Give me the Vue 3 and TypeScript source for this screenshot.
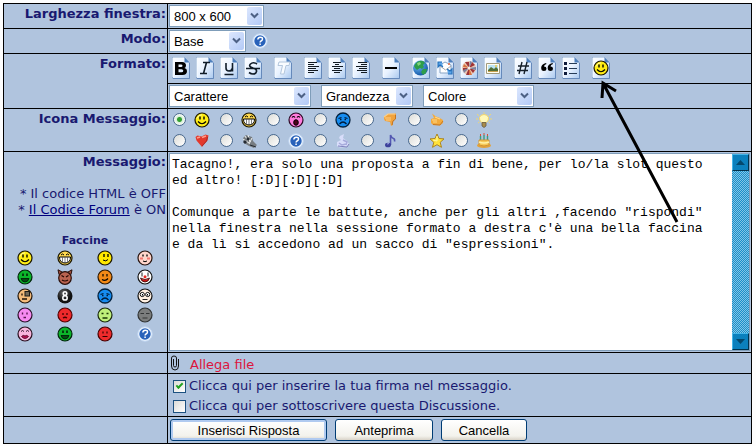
<script setup lang="ts">
import { ref } from 'vue'

interface Tool { icon: string; label: string }

const windowSize = ref('800 x 600')
const mode = ref('Base')
const messageIcon = ref('smile')
const signature = ref(true)
const subscribe = ref(false)

const message = ref(
  [
    'Tacagno!, era solo una proposta a fin di bene, per lo/la slot questo',
    'ed altro! [:D][:D][:D]',
    '',
    'Comunque a parte le battute, anche per gli altri ,facendo "rispondi"',
    "nella finestra nella sessione formato a destra c'è una bella faccina",
    'e da lì si accedono ad un sacco di "espressioni".',
  ].join('\n'),
)

const toolGroups: Tool[][] = [
  [
    { icon: 'bold', label: 'Grassetto' },
    { icon: 'italic', label: 'Corsivo' },
    { icon: 'underline', label: 'Sottolineato' },
    { icon: 'strike', label: 'Barrato' },
  ],
  [{ icon: 'type', label: 'Testo' }],
  [
    { icon: 'left', label: 'Allinea a sinistra' },
    { icon: 'center', label: 'Centra' },
    { icon: 'right', label: 'Allinea a destra' },
  ],
  [{ icon: 'rule', label: 'Linea orizzontale' }],
  [
    { icon: 'globe', label: 'Collegamento' },
    { icon: 'mail', label: 'Email' },
    { icon: 'flash', label: 'Flash' },
    { icon: 'picture', label: 'Immagine' },
  ],
  [
    { icon: 'hash', label: 'Codice' },
    { icon: 'quote', label: 'Citazione' },
    { icon: 'list', label: 'Elenco' },
  ],
  [{ icon: 'smile', label: 'Faccine' }],
]

const messageIcons = [
  'smile', 'grin', 'shock', 'sad', 'down', 'up', 'bulb',
  'heart', 'zebra', 'help', 'cloud', 'note', 'star', 'cake',
]

const smileys = [
  'smile', 'grin', 'happy', 'blush',
  'green', 'devil', 'orange', 'clown',
  'monocle', 'eight', 'sad', 'wideeyes',
  'kiss', 'red', 'lime', 'dead',
  'lips', 'green', 'angry', 'help',
]
</script>

<template>
  <svg class="sprite" aria-hidden="true">
    <defs>
      <linearGradient id="paper" x1="0" y1="0" x2="1" y2="1">
        <stop offset="0" stop-color="#ffffff" />
        <stop offset="0.5" stop-color="#e8f2ff" />
        <stop offset="1" stop-color="#a9c8ee" />
      </linearGradient>
      <radialGradient id="ball" cx="0.4" cy="0.3" r="0.7">
        <stop offset="0" stop-color="#666" />
        <stop offset="0.7" stop-color="#111" />
      </radialGradient>
      <radialGradient id="sea" cx="0.35" cy="0.3" r="0.8">
        <stop offset="0" stop-color="#79c4ff" />
        <stop offset="1" stop-color="#064a9c" />
      </radialGradient>
    </defs>

    <symbol id="sheet" viewBox="0 0 18 22">
      <path d="M.5.5h12l5 5v16H.5z" fill="url(#paper)" stroke="#8eabd0" />
      <path d="M1 20V1h11" fill="none" stroke="#f8fcff" />
      <path d="M12.500.5v5h5z" fill="#4e80bd" />
      <path d="M17.500 6v15.500H1" fill="none" stroke="#6589bb" />
    </symbol>

    <symbol id="smile" viewBox="0 0 16 16">
      <circle cx="8" cy="8" r="7" fill="#ffed14" stroke="#191500" stroke-width="1.200" />
      <path d="M3 6.500A5.300 5.300 0 0 1 8 2.800" stroke="#fff9a0" fill="none" />
      <path d="M6 4.500v3M10 4.500v3" stroke="#000" stroke-width="1.400" />
      <path d="M4 9.500q4 4.500 8 0" stroke="#000" fill="none" stroke-width="1.200" />
    </symbol>
    <symbol id="happy" viewBox="0 0 16 16">
      <circle cx="8" cy="8" r="7" fill="#ffe800" stroke="#191500" stroke-width="1.200" />
      <path d="M7 4v3M11 4v3" stroke="#000" stroke-width="1.300" />
      <path d="M6 10q3 2 5-.5" stroke="#000" fill="none" />
    </symbol>
    <symbol id="grin" viewBox="0 0 16 16">
      <circle cx="8" cy="8" r="7" fill="#ffd94e" stroke="#191500" stroke-width="1.200" />
      <path d="M4 5q1.500-2 3 0M9 5q1.500-2 3 0" stroke="#000" fill="none" />
      <path d="M2.500 7h11q0 6-5.500 6T2.500 7z" fill="#fff" stroke="#000" />
      <path d="M5.500 7.500v4.500M8 7.500V13M10.500 7.500v4.500" stroke="#000" stroke-width=".5" />
    </symbol>
    <symbol id="shock" viewBox="0 0 16 16">
      <circle cx="8" cy="8" r="7" fill="#ff7bdc" stroke="#2b0a24" stroke-width="1.200" />
      <path d="M4 5.500q1.500-2 3 0M9 5.500q1.500-2 3 0" stroke="#000" fill="none" stroke-width="1.200" />
      <ellipse cx="8" cy="10.500" rx="2.300" ry="2.800" fill="#50001c" stroke="#000" />
    </symbol>
    <symbol id="sad" viewBox="0 0 16 16">
      <circle cx="8" cy="8" r="7" fill="#168cf0" stroke="#03213e" stroke-width="1.300" />
      <path d="M3.500 6.500l3-1M12.500 6.500l-3-1M5 7.500h1.500M9.500 7.500H11" stroke="#001c3b" stroke-width="1.300" />
      <path d="M4.500 12q3.500-4 7 0" stroke="#001c3b" fill="none" stroke-width="1.300" />
    </symbol>
    <symbol id="blush" viewBox="0 0 16 16">
      <circle cx="8" cy="8" r="7" fill="#ffd5ca" stroke="#26120d" stroke-width="1.200" />
      <path d="M6 4.500v2M10 4.500v2" stroke="#000" stroke-width="1.300" />
      <path d="M3 8.500h3M10 8.500h3" stroke="#f37770" stroke-width="2" />
      <path d="M6 11q2 1.500 4 0" stroke="#000" fill="none" />
    </symbol>
    <symbol id="green" viewBox="0 0 16 16">
      <circle cx="8" cy="8" r="7" fill="#0cb52a" stroke="#00240a" stroke-width="1.200" />
      <path d="M6 4.500v2.500M10 4.500v2.500" stroke="#000" stroke-width="1.300" />
      <path d="M4 9.500h8q-1 3.500-4 3.500T4 9.500z" fill="#064b13" stroke="#001705" stroke-width=".8" />
    </symbol>
    <symbol id="devil" viewBox="0 0 16 16">
      <path d="M2 5.500L1 .8 5 3M14 5.500L15 .8 11 3" fill="#a65341" stroke="#290d08" />
      <circle cx="8" cy="9" r="6.300" fill="#b96350" stroke="#290d08" stroke-width="1.200" />
      <path d="M4.500 6.500L7 8M11.500 6.500L9 8M5 11q3 2 6 0" stroke="#230600" fill="none" stroke-width="1.200" />
    </symbol>
    <symbol id="orange" viewBox="0 0 16 16">
      <circle cx="8" cy="8" r="7" fill="#f38a17" stroke="#2c1700" stroke-width="1.200" />
      <path d="M6 5v2.500M10 5v2.500M5 10.500q3.500 2 6-1" stroke="#000" fill="none" stroke-width="1.200" />
    </symbol>
    <symbol id="clown" viewBox="0 0 16 16">
      <circle cx="8" cy="8" r="7" fill="#fff" stroke="#111" stroke-width="1.200" />
      <path d="M5 3.500v4M11 3.500v4" stroke="#222" />
      <circle cx="8" cy="7.800" r="1.500" fill="#e92a22" />
      <path d="M3.500 9q4.500 3 9 0-1 4-4.500 4T3.500 9z" fill="#cf1717" stroke="#300" stroke-width=".8" />
    </symbol>
    <symbol id="monocle" viewBox="0 0 16 16">
      <circle cx="8" cy="8" r="7" fill="#f5bb7a" stroke="#23170b" stroke-width="1.200" />
      <rect x="8" y="3.500" width="4.500" height="4.500" fill="#736958" stroke="#1d1a16" />
      <path d="M5 5.500v2M5 11h5" stroke="#1d1208" stroke-width="1.300" />
    </symbol>
    <symbol id="eight" viewBox="0 0 16 16">
      <circle cx="8" cy="8" r="7.500" fill="url(#ball)" />
      <circle cx="8" cy="5.500" r="1.800" fill="none" stroke="#fff" stroke-width="1.500" />
      <circle cx="8" cy="9.900" r="2.200" fill="none" stroke="#fff" stroke-width="1.500" />
    </symbol>
    <symbol id="wideeyes" viewBox="0 0 16 16">
      <circle cx="8" cy="8" r="7" fill="#fff0e2" stroke="#111" stroke-width="1.200" />
      <circle cx="5.300" cy="6.500" r="2.100" fill="#fff" stroke="#111" />
      <circle cx="10.700" cy="6.500" r="2.100" fill="#fff" stroke="#111" />
      <path d="M5 6h1v1.500H5zM10 6h1v1.500h-1z" fill="#000" />
      <path d="M5.500 11.500h5" stroke="#222" />
    </symbol>
    <symbol id="kiss" viewBox="0 0 16 16">
      <circle cx="8" cy="8" r="7" fill="#f58af0" stroke="#2b1029" stroke-width="1.200" />
      <path d="M5.500 5.500v2M10 5.500v2M6.500 10.500h2.500" stroke="#5b1852" stroke-width="1.400" />
    </symbol>
    <symbol id="red" viewBox="0 0 16 16">
      <circle cx="8" cy="8" r="7" fill="#ed292b" stroke="#500" stroke-width="1.200" />
      <path d="M6 6v2M10 6v2M6 11q2-1.500 4 0" stroke="#400" fill="none" stroke-width="1.300" />
    </symbol>
    <symbol id="angry" viewBox="0 0 16 16">
      <circle cx="8" cy="8" r="7" fill="#ed2b2c" stroke="#400" stroke-width="1.200" />
      <path d="M6 5.500v2M10 5.500v2M5.500 10.500h5" stroke="#310000" stroke-width="1.200" />
    </symbol>
    <symbol id="lime" viewBox="0 0 16 16">
      <circle cx="8" cy="8" r="7" fill="#bff07b" stroke="#1b290d" stroke-width="1.200" />
      <path d="M4.500 6.500h2M9.500 6.500h2M5.500 11h5" stroke="#1c3707" stroke-width="1.300" />
    </symbol>
    <symbol id="dead" viewBox="0 0 16 16">
      <circle cx="8" cy="8" r="7" fill="#7b7d7d" stroke="#303334" stroke-width="1.200" />
      <path d="M3.500 6.500h3.500M9 6.500h3.500M5.500 11h5" stroke="#343637" stroke-width="1.200" />
    </symbol>
    <symbol id="lips" viewBox="0 0 16 16">
      <circle cx="8" cy="8" r="7" fill="#f9b4dc" stroke="#28101e" stroke-width="1.200" />
      <path d="M4 5.500q1.500-2 3 0M9 5.500q1.500-2 3 0" stroke="#34142a" fill="none" />
      <path d="M4.500 10.500q2-2 3.500-.5 1.500-1.500 3.500.5-3.500 4-7 0z" fill="#b91052" stroke="#4b0822" stroke-width=".8" />
    </symbol>
    <symbol id="help" viewBox="0 0 16 16">
      <circle cx="8" cy="8" r="7.300" fill="#edf6ff" stroke="#bed3ef" />
      <circle cx="8" cy="8" r="5.700" fill="#2862ba" />
      <path d="M5.800 6.500q.2-2.300 2.500-2.300t2.200 1.900q0 1.200-1.400 1.900-1 .5-1 1.500M8.100 10.500v1.600" fill="none" stroke="#fff" stroke-width="1.500" />
    </symbol>
    <symbol id="down" viewBox="0 0 16 16">
      <path d="M2 5l4-3 8-.5v5l-2 2-1 .5v4l-2 1-1-4-5-1-1-2z" fill="#f0a33e" />
      <path d="M2 5l4-3 7 0M3 6h6M4 8h5" stroke="#ffd083" fill="none" stroke-width="1.200" />
      <path d="M13.500 3v4l-2.500 2-1 4" stroke="#c27425" fill="none" />
    </symbol>
    <symbol id="up" viewBox="0 0 16 16">
      <path d="M3 1.500l4 3 3 1 4 2.500v3l-3 2.500-7-.5-2-2V7l3-1z" fill="#f3aa3d" />
      <path d="M3 8h5M4 10h4M6 5l5 2" stroke="#ffd887" fill="none" stroke-width="1.200" />
      <path d="M14 9l-3 4-7-.5" stroke="#c37829" fill="none" />
    </symbol>
    <symbol id="bulb" viewBox="0 0 16 16">
      <path d="M1 2l2 2M15 2l-2 2M0 7h2M16 7h-2M8 0v1.500M2 11l1.500-1M14 11l-1.500-1" stroke="#eed678" />
      <path d="M5.500 10.500Q3 8 3.500 5.500 4.500 2.500 8 2.500t4.500 3Q13 8 10.500 10.500z" fill="#fff8ba" stroke="#f3d56c" />
      <path d="M6 10.500h4v3.500l-2 1.500-2-1.500z" fill="#a98c48" stroke="#665a46" stroke-width=".8" />
    </symbol>
    <symbol id="heart" viewBox="0 0 16 16">
      <path d="M8 14L2.500 7.500 1.500 4l2-1.500 4 1 4-2 3 1-1 5z" fill="#e2392d" />
      <path d="M3 5l3-1M8 4.500l4-1.500" stroke="#ff9d89" stroke-width="1.500" />
      <path d="M13.500 4l-1 4-4.500 5" stroke="#a82b29" fill="none" />
    </symbol>
    <symbol id="zebra" viewBox="0 0 16 16">
      <path d="M2 5l3-3 6 2 1 4 4 4-3 3-5-2-5-3z" fill="#777d82" />
      <path d="M4 3l3 5M7 2l2 7M2 6l6 4M11 5l-3 6" stroke="#eff1ef" />
      <path d="M3 8h2v2H3zM6 5h2v2H6zM9 12l6 2" fill="#252b32" stroke="#252b32" />
    </symbol>
    <symbol id="cloud" viewBox="0 0 16 16">
      <path d="M5 3l4-2-1 4 4 3 2 3-2 3-7 .5L2 13V9l4-2-2-2z" fill="#d8ddfa" />
      <path d="M4 10l3 2 4-1M8 7l4 2-1 3" fill="none" stroke="#a6aadb" stroke-width="1.500" />
      <path d="M3 13l9 1 2-3" stroke="#7f82bd" fill="none" />
    </symbol>
    <symbol id="note" viewBox="0 0 16 16">
      <path d="M8.500 12V2q1 3 3 3.500 1.500.5 1 3" fill="none" stroke="#5358b1" stroke-width="1.600" />
      <ellipse cx="6" cy="12" rx="3" ry="2.300" fill="#3c419b" />
      <path d="M5 11l2-.5" stroke="#9ba2e3" />
    </symbol>
    <symbol id="star" viewBox="0 0 16 16">
      <path d="M8 1l2 4.500 5 .4-3.800 3.400 1.300 5L8 11.700l-4.500 2.600 1.300-5L1 5.900l5-.4z" fill="#ffe23b" stroke="#ac841f" />
      <path d="M8 3v5L4 7" stroke="#fff9a5" fill="none" />
    </symbol>
    <symbol id="cake" viewBox="0 0 16 16">
      <path d="M4.500 3v4M8 2v5M11.500 3v4" stroke="#3d9b80" stroke-width="1.400" />
      <path d="M4.500 1v2M8 0v2M11.500 1v2" stroke="#d64f37" />
      <ellipse cx="8" cy="12.500" rx="7" ry="2.500" fill="#e2a23b" />
      <path d="M3 7h10v5q-5 2-10 0z" fill="#f7c958" stroke="#d39432" />
      <path d="M3 9q5 2 10 0" stroke="#fff1a6" stroke-width="1.500" fill="none" />
    </symbol>

    <symbol id="bold" viewBox="0 0 16 16">
      <path fill-rule="evenodd" d="M2 2h7q4 0 4 3.500 0 2-1.500 2.500 2.500.5 2.500 3 0 4-4.500 4H2zM5.500 4.500V7H8q1.500 0 1.500-1.200T8 4.500zm0 4.800v3H8.500q1.800 0 1.800-1.500t-1.800-1.500z" />
    </symbol>
    <symbol id="italic" viewBox="0 0 16 16">
      <path d="M6 2.500h7M9.500 2.500l-3 11M3 13.500h7" fill="none" stroke="#101c28" stroke-width="1.600" />
    </symbol>
    <symbol id="underline" viewBox="0 0 16 16">
      <path d="M5 3v5q0 3 3 3t3.500-3V3M11.500 3v8.500M3.500 14.500h9" fill="none" stroke="#101c28" stroke-width="1.600" />
    </symbol>
    <symbol id="strike" viewBox="0 0 16 16">
      <path d="M12 4Q8 1.500 5.500 4T8 8q4 1 3.500 3.500T8 14q-2 0-4-1.500M1 8.500h14" fill="none" stroke="#101c28" stroke-width="1.600" />
    </symbol>
    <symbol id="type" viewBox="0 0 16 16">
      <path d="M4 2h11l-1 3.500h-3L9 14H5.500l2-8.500H3z" fill="#f9fcff" stroke="#b3c6dc" />
    </symbol>
    <symbol id="left" viewBox="0 0 16 16">
      <path d="M3 2.500h9M3 4.500h6M3 6.500h11M3 8.500h8M3 10.500h10M3 12.500h6" stroke="#111a22" />
    </symbol>
    <symbol id="center" viewBox="0 0 16 16">
      <path d="M4 2.500h8M6 4.500h4M3 6.500h11M5 8.500h6M3 10.500h10M5 12.500h6" stroke="#111a22" />
    </symbol>
    <symbol id="right" viewBox="0 0 16 16">
      <path d="M5 2.500h9M8 4.500h6M3 6.500h11M6 8.500h8M4 10.500h10M8 12.500h6" stroke="#111a22" />
    </symbol>
    <symbol id="rule" viewBox="0 0 16 16"><path d="M2 8h12" stroke="#000" stroke-width="2" /></symbol>
    <symbol id="globe" viewBox="0 0 16 16">
      <circle cx="7.500" cy="8" r="7.500" fill="url(#sea)" />
      <path d="M3 3q3-3 7-2l2 2-2 2 1 2-2 2-2-1-3 2-2-2-1-2zM10 9l4 0-1 4-3 2-2-3z" fill="#2e9d4b" />
      <path d="M4 3l3-1 1 2-3 2z" fill="#83d47e" />
    </symbol>
    <symbol id="mail" viewBox="0 0 16 16">
      <path d="M3 5l5-3 6 3v8H3z" fill="#fff" stroke="#86a3c4" />
      <path d="M3 6l5.500 4L14 6" stroke="#aaa" fill="none" />
      <path d="M5 2H1v5l2-2 3 2M11 14h4V9l-2 2-3-2" fill="#5ba5e9" stroke="#2470ba" stroke-width="1.200" />
      <path d="M11 3h2v2h-2z" fill="#e08162" />
    </symbol>
    <symbol id="flash" viewBox="0 0 16 16">
      <circle cx="8" cy="8" r="7" fill="#eac6b2" />
      <path d="M8 8L4 2h4zM8 8l6-3-3-3zM8 8l6 2-2 3zM8 8v7H5zM8 8l-6 3V8z" fill="#9e3437" />
      <path d="M8 8L2 7l1-3zM8 8l3 7-3 0z" fill="#d7733e" />
      <path d="M8 8l1-7 2 1zM8 8l7-1v3zM8 8l-5 5-1-3z" fill="#7b82a1" />
      <circle cx="8" cy="8" r="1.500" fill="#f6eee8" />
    </symbol>
    <symbol id="picture" viewBox="0 0 16 16">
      <path d="M1.500 3.500h13v10h-13z" fill="#fffdf0" stroke="#a29b7c" />
      <path d="M3 5h10v7H3z" fill="#bce3f3" />
      <path d="M3 10l3-3 3 2 2-2 2 2v3H3z" fill="#516f38" />
      <path d="M3 11h10v1H3z" fill="#c9a450" />
      <circle cx="11" cy="6" r="1" fill="#f5cc45" />
    </symbol>
    <symbol id="hash" viewBox="0 0 16 16">
      <path d="M7 2L4 14M12 2L9 14M3 6h11M2 10.500h11" stroke="#17212b" stroke-width="1.400" />
    </symbol>
    <symbol id="quote" viewBox="0 0 16 16">
      <path d="M7.500 4Q5 4.500 5 6.500q2.500 0 2.500 2.200T5 11Q2 11 2.200 7.500T7 3zM14 4q-2.500.5-2.500 2.500Q14 6.500 14 8.700T11.500 11q-3 0-2.800-3.500T13.500 3z" />
    </symbol>
    <symbol id="list" viewBox="0 0 16 16">
      <path d="M1 2h3v3H1zM1 7h3v3H1zM1 12h3v3H1z" fill="#101c3b" />
      <path d="M6 3.500h8M6 8.500h8M6 13.500h8" stroke="#253b57" />
    </symbol>
  </svg>

  <form class="board" @submit.prevent>
    <div class="row">
      <label class="name" for="size">Larghezza finestra:</label>
      <div class="value">
        <span class="picker size">
          <select id="size" v-model="windowSize">
            <option>800 x 600</option>
            <option>1024 x 768</option>
          </select>
          <svg class="arrow" viewBox="0 0 15 17"><path d="M4 6l3.500 3.500L11 6" /></svg>
        </span>
      </div>
    </div>

    <div class="row">
      <label class="name" for="mode">Modo:</label>
      <div class="value">
        <span class="picker mode">
          <select id="mode" v-model="mode">
            <option>Base</option>
            <option>Avanzato</option>
          </select>
          <svg class="arrow" viewBox="0 0 15 17"><path d="M4 6l3.500 3.500L11 6" /></svg>
        </span>
        <button type="button" class="plain hint" aria-label="Aiuto">
          <svg class="glyph"><use href="#help" /></svg>
        </button>
      </div>
    </div>

    <div class="row">
      <div class="name">Formato:</div>
      <div class="stack">
        <div class="tools">
          <div v-for="(group, g) in toolGroups" :key="g" class="group">
            <button v-for="tool in group" :key="tool.icon" type="button" class="plain tool" :aria-label="tool.label">
              <svg class="sheet"><use href="#sheet" /></svg>
              <svg class="glyph"><use :href="'#' + tool.icon" /></svg>
            </button>
          </div>
        </div>
        <div class="fonts">
          <span class="picker face">
            <select aria-label="Carattere"><option>Carattere</option></select>
            <svg class="arrow" viewBox="0 0 15 17"><path d="M4 6l3.500 3.500L11 6" /></svg>
          </span>
          <span class="picker scale">
            <select aria-label="Grandezza"><option>Grandezza</option></select>
            <svg class="arrow" viewBox="0 0 15 17"><path d="M4 6l3.500 3.500L11 6" /></svg>
          </span>
          <span class="picker tint">
            <select aria-label="Colore"><option>Colore</option></select>
            <svg class="arrow" viewBox="0 0 15 17"><path d="M4 6l3.500 3.500L11 6" /></svg>
          </span>
        </div>
      </div>
    </div>

    <div class="row">
      <div class="name">Icona Messaggio:</div>
      <div class="moods">
        <label v-for="icon in messageIcons" :key="icon" class="mood">
          <input v-model="messageIcon" type="radio" name="icon" :value="icon" :aria-label="icon">
          <svg class="glyph"><use :href="'#' + icon" /></svg>
        </label>
      </div>
    </div>

    <div class="row">
      <div class="name">
        <label for="message">Messaggio:</label>
        <p class="codes">
          * Il codice HTML è OFF<br>
          * <a href="#codice">Il Codice Forum</a> è ON
        </p>
        <h2 class="title">Faccine</h2>
        <div class="smileys">
          <button v-for="(face, i) in smileys" :key="i" type="button" class="plain" :aria-label="face">
            <svg class="glyph"><use :href="'#' + face" /></svg>
          </button>
        </div>
      </div>
      <div class="editor">
        <textarea id="message" v-model="message" spellcheck="false"></textarea>
        <div class="scroll">
          <button type="button" class="step" aria-label="Su">
            <svg viewBox="0 0 9 5"><path d="M0 5l4.500-5L9 5z" /></svg>
          </button>
          <button type="button" class="step" aria-label="Giù">
            <svg viewBox="0 0 9 5"><path d="M0 0l4.500 5L9 0z" /></svg>
          </button>
        </div>
      </div>
    </div>

    <div class="row">
      <div class="name"></div>
      <div class="attach">
        <svg class="clip" viewBox="0 0 10 16">
          <path d="M3.500 4v6.500q0 1.500 1.500 1.500t1.500-1.500V3q0-2-2.500-2T1.500 3v8q0 4 3.500 4t3.500-4V4" />
        </svg>
        <a href="#allega">Allega file</a>
      </div>
    </div>

    <div class="row">
      <div class="name"></div>
      <div class="options">
        <label><input v-model="signature" type="checkbox">Clicca qui per inserire la tua firma nel messaggio.</label>
        <label><input v-model="subscribe" type="checkbox">Clicca qui per sottoscrivere questa Discussione.</label>
      </div>
    </div>

    <div class="row">
      <div class="name"></div>
      <div class="actions">
        <button type="submit" class="push main">Inserisci Risposta</button>
        <button type="button" class="push preview">Anteprima</button>
        <button type="reset" class="push cancel">Cancella</button>
      </div>
    </div>

    <svg class="pointer" viewBox="0 0 86 146" aria-hidden="true">
      <path d="M80 142L7 5M5 18L6 3l13 8" />
    </svg>
  </form>
</template>

<style>
body {
  background: #fdfdfd;
}
</style>

<style scoped>
.sprite {
  position: absolute;
  width: 0;
  height: 0;
}

.board {
  position: relative;
  margin: 3px 4px 0 3px;
  border: 1px solid #000;
  border-bottom: 0;
  background: #b0c4de;
  color: #191970;
  font: 13px/16px "DejaVu Sans", sans-serif;
}

.row {
  display: grid;
  grid-template-columns: 164px minmax(0, 1fr);
  border-bottom: 1px solid #000;
}

.name {
  padding: 2px 1px 0 0;
  border-right: 1px solid #000;
  font-weight: bold;
  text-align: right;
}

.value,
.fonts {
  display: flex;
  align-items: center;
  padding: 1px;
}

.picker {
  display: grid;
  height: 22px;
  align-items: center;
}

.picker select {
  grid-area: 1 / 1;
  appearance: none;
  width: 100%;
  height: 22px;
  padding: 0 20px 0 4px;
  border: 1px solid #7f9db9;
  border-radius: 0;
  background: #fff;
  color: #000;
  font: 13px "Liberation Sans", sans-serif;
}

.arrow {
  grid-area: 1 / 1;
  justify-self: end;
  width: 15px;
  height: 18px;
  margin-right: 2px;
  border-radius: 2px;
  background: linear-gradient(135deg, #dce7fe, #b3caf6);
  pointer-events: none;
}

.arrow path {
  fill: none;
  stroke: #4d6185;
  stroke-width: 2;
}

.size { width: 95px; }
.mode { width: 77px; }
.face { width: 142px; }
.scale { width: 92px; }
.tint { width: 111px; }

.fonts { gap: 10px; }

.plain {
  display: grid;
  place-items: center;
  padding: 0;
  border: 0;
  background: none;
}

.glyph {
  width: 16px;
  height: 16px;
}

.hint { margin-left: 6px; }

.tools {
  display: flex;
  gap: 6px;
  padding: 2px 1px 4px;
  border-bottom: 1px solid #000;
}

.group { display: flex; }

.tool {
  width: 24px;
  height: 23px;
}

.tool > svg { grid-area: 1 / 1; }

.sheet {
  width: 18px;
  height: 22px;
}

.moods {
  display: grid;
  grid-template-columns: repeat(7, 47px);
  grid-auto-rows: 21px;
  padding-left: 5px;
}

.mood {
  display: flex;
  align-items: center;
  gap: 8px;
}

.mood input {
  appearance: none;
  width: 13px;
  height: 13px;
  margin: 0;
  border: 1px solid #49688c;
  border-radius: 50%;
  background: linear-gradient(135deg, #dcdcd7, #fff);
}

.mood input:checked {
  background: radial-gradient(circle, #32a032 2px, #d9eed9 3px, #fff 6px);
}

.codes {
  margin: 16px 0 0;
  font-weight: normal;
  white-space: nowrap;
}

.codes a { color: #00007d; }

.title {
  margin: 16px 0 0;
  font-size: 11px;
  line-height: 14px;
  text-align: center;
}

.smileys {
  display: grid;
  grid-template-columns: repeat(4, 40px);
  grid-auto-rows: 19px;
  justify-content: center;
}

.editor {
  display: flex;
  margin: 1px;
  border: 1px solid #7f9db9;
  background: #fff;
}

.editor textarea {
  flex: 1;
  min-width: 0;
  height: 196px;
  box-sizing: border-box;
  padding: 3px 2px;
  border: 0;
  outline: 0;
  resize: none;
  overflow: hidden;
  background: none;
  color: #000;
  font: 13px/16px "Liberation Mono", monospace;
}

.scroll {
  display: flex;
  flex-direction: column;
  justify-content: space-between;
  width: 17px;
  background: repeating-conic-gradient(#1b8fc9 0 25%, #83c5e6 0 50%) 0 0 / 2px 2px;
}

.step {
  display: grid;
  place-items: center;
  height: 17px;
  padding: 0;
  border: 1px solid;
  border-color: #45b5e8 #00334e #00334e #45b5e8;
  background: #0b80bd;
}

.step svg {
  width: 9px;
  height: 5px;
  fill: #04486d;
}

.attach {
  display: flex;
  align-items: center;
  gap: 10px;
  height: 20px;
  padding-left: 2px;
}

.attach a {
  padding-top: 3px;
  color: #dc143c;
  text-decoration: none;
}

.clip {
  width: 10px;
  height: 16px;
  fill: none;
  stroke: #111;
}

.options {
  display: grid;
  padding: 2px 5px 0;
}

.options label {
  display: flex;
  align-items: center;
  gap: 3px;
  height: 20px;
}

.options input {
  appearance: none;
  display: grid;
  place-items: center;
  width: 13px;
  height: 13px;
  margin: 0;
  border: 1px solid #1c5180;
  background: linear-gradient(135deg, #dcdcd7, #fff);
}

.options input:checked::before {
  content: "";
  width: 7px;
  height: 4px;
  margin-bottom: 2px;
  box-sizing: border-box;
  border: solid #21a121;
  border-width: 0 0 2px 2px;
  transform: rotate(-45deg);
}

.actions {
  display: flex;
  gap: 8px;
  padding: 2px;
}

.push {
  height: 22px;
  padding: 0;
  border: 1px solid #003c74;
  border-radius: 3px;
  background: linear-gradient(#fff, #f3f2ec 80%, #d9d3c8);
  color: #000;
  font: 13px "Liberation Sans", sans-serif;
}

.main {
  width: 157px;
  box-shadow: inset 0 0 0 2px #b0caf0;
}

.preview { width: 98px; }
.cancel { width: 86px; }

.pointer {
  position: absolute;
  top: 76px;
  left: 593px;
  width: 86px;
  height: 146px;
  fill: none;
  stroke: #000;
  stroke-width: 3;
  pointer-events: none;
}
</style>
